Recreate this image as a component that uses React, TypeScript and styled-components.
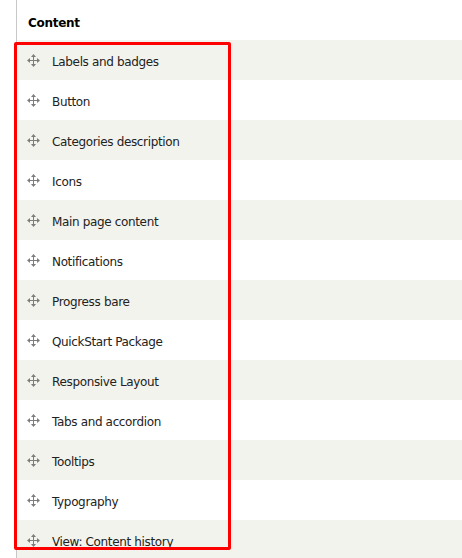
import React from 'react'
import styled, { createGlobalStyle } from 'styled-components'

const GlobalStyle = createGlobalStyle`
  html, body {
    margin: 0;
    padding: 0;
    background: #fff;
  }
  body {
    font-family: "DejaVu Sans", Verdana, sans-serif;
    color: #222;
  }
`

const items = [
  'Labels and badges',
  'Button',
  'Categories description',
  'Icons',
  'Main page content',
  'Notifications',
  'Progress bare',
  'QuickStart Package',
  'Responsive Layout',
  'Tabs and accordion',
  'Tooltips',
  'Typography',
  'View: Content history',
]

const DragHandle: React.FC = () => (
  <svg width="13" height="13" viewBox="0 0 13 13" fill="#7d7d7d">
    <rect x="6" y="2" width="1" height="9" />
    <rect x="2" y="6" width="9" height="1" />
    <polygon points="6.5,0 9,3 4,3" />
    <polygon points="6.5,13 9,10 4,10" />
    <polygon points="0,6.5 3,4 3,9" />
    <polygon points="13,6.5 10,4 10,9" />
  </svg>
)

const App: React.FC = () => {
  return (
    <Page>
      <GlobalStyle />
      <Table>
        <HeaderRow>Content</HeaderRow>
        {items.map((label, i) => (
          <Row key={label} striped={i % 2 === 0}>
            <Handle><DragHandle /></Handle>
            <Label>{label}</Label>
          </Row>
        ))}
      </Table>
      <Highlight />
    </Page>
  )
}


const Page = styled.div`
  position: relative;
  width: 462px;
  height: 558px;
  overflow: hidden;
`

const Table = styled.div`
  margin-left: 16px;
  border-left: 1px solid #c8c8c8;
  display: flex;
  flex-direction: column;
`

const HeaderRow = styled.div`
  height: 40px;
  display: flex;
  align-items: center;
  padding-left: 11px;
  padding-top: 5px;
  box-sizing: border-box;
  font-size: 12px;
  font-weight: bold;
  letter-spacing: -0.3px;
  color: #000;
`

const Row = styled.div<{ striped: boolean }>`
  height: 40px;
  display: flex;
  align-items: center;
  padding-left: 10px;
  background: ${props => props.striped ? '#f3f3ed' : '#fff'};
`

const Handle = styled.span`
  display: flex;
  width: 13px;
  height: 13px;
  margin-right: 12px;
`

const Label = styled.span`
  font-size: 12px;
  letter-spacing: -0.35px;
  padding-top: 3px;
  color: #222;
`

const Highlight = styled.div`
  position: absolute;
  left: 14px;
  top: 42px;
  width: 217px;
  height: 508px;
  box-sizing: border-box;
  border: 3px solid #ff0000;
  border-radius: 2px;
`


export default App
